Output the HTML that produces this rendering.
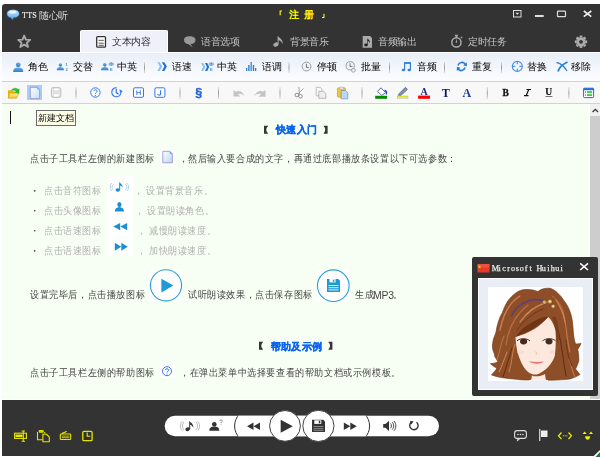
<!DOCTYPE html>
<html><head><meta charset="utf-8">
<style>
*{margin:0;padding:0;box-sizing:border-box}
html,body{width:600px;height:457px;overflow:hidden;background:#fff;font-family:"Liberation Sans",sans-serif}
.a{position:absolute}
.t{position:absolute;white-space:nowrap;font-size:9px;line-height:10px;letter-spacing:0.6px}
svg{position:absolute;overflow:visible}
.tb{font-size:10px;letter-spacing:-0.4px;will-change:transform}
.tc{transform:scaleY(1.1);transform-origin:0 90%}
</style></head><body>
<!-- window frame -->
<div class="a" style="left:2px;top:4px;width:598px;height:48px;background:#333;border-top-left-radius:3px"></div>
<!-- title -->
<div class="t" style="left:22px;top:11px;color:#f0f0f0;font-family:'Liberation Serif',serif;font-size:8px;letter-spacing:0.3px;will-change:transform;-webkit-text-stroke:0.15px #f0f0f0">TTS</div>
<div class="t tb" style="left:38.5px;top:10.5px;color:#ddd">随心听</div>
<div class="t" style="left:288.5px;top:10px;color:#ff0;font-size:10px;font-weight:bold">注</div><div class="t" style="left:303.5px;top:10px;color:#ff0;font-size:10px;font-weight:bold">册</div>
<!-- tabs -->
<div class="a" style="left:80px;top:30px;width:88px;height:23px;background:#eef1f9;border:1px solid #fff;border-bottom:none;border-radius:2px 2px 0 0"></div>
<div class="t tb" style="left:112px;top:37px;color:#333">文本内容</div>
<div class="t tb" style="left:201px;top:37px;color:#c4c4c4">语音选项</div>
<div class="t tb" style="left:290px;top:37px;color:#c4c4c4">背景音乐</div>
<div class="t tb" style="left:378px;top:37px;color:#c4c4c4">音频输出</div>
<div class="t tb" style="left:468px;top:37px;color:#c4c4c4">定时任务</div>

<!-- title icons -->
<svg style="left:0;top:0" width="600" height="60">
 <defs><linearGradient id="bub" x1="0" y1="0" x2="0" y2="1"><stop offset="0" stop-color="#d8efff"/><stop offset="0.5" stop-color="#8ccaf8"/><stop offset="1" stop-color="#3b8fe0"/></linearGradient></defs>
 <path d="M7 13.8 C7 11 9.5 9.8 13 9.8 C16.5 9.8 19.2 11 19.2 13.8 C19.2 16.3 16.8 17.8 13.5 17.8 L12.8 20 L10.6 17.7 C8.5 17.3 7 16 7 13.8Z" fill="url(#bub)" stroke="#2a6fbf" stroke-width="0.5"/>
 <ellipse cx="12.5" cy="12.3" rx="3.5" ry="1.2" fill="#fff" opacity="0.8"/>
 <!-- star -->
 <path d="M24.2 35.6 L25.9 39.6 L30.2 39.9 L26.9 42.7 L28 46.9 L24.2 44.6 L20.4 46.9 L21.5 42.7 L18.2 39.9 L22.5 39.6Z" fill="none" stroke="#a8a8a8" stroke-width="1.9" stroke-linejoin="round"/>
 <!-- doc icon active tab -->
 <rect x="96.7" y="36.6" width="8.8" height="10.6" rx="1" fill="#fff" stroke="#333" stroke-width="1.3"/>
 <path d="M98.6 40.3h5.2M98.6 43.2h5.2M98.6 45.3h5.2" stroke="#555" stroke-width="1"/>
 <!-- chat bubble -->
 <path d="M184 40 C184 37.6 186 36.3 189.5 36.3 C193 36.3 195.5 37.6 195.5 40 C195.5 42.5 193.5 44 190.5 44 L192.8 47.5 L188.2 44 C185.8 43.8 184 42.5 184 40Z" fill="#999"/>
 <!-- music note -->
 <ellipse cx="275.8" cy="44.6" rx="2.6" ry="2.1" fill="#aaa" transform="rotate(-20 275.8 44.6)"/>
 <path d="M277.6 44.5 L277.6 36 C279 37.5 283.5 39.5 282.6 44.5 C282 41.5 279.5 40.5 278.6 40.3 L278.6 44.5Z" fill="#aaa"/>
 <!-- doc music -->
 <path d="M362.7 36 h7.3 l2 2 v9.8 h-9.3Z" fill="#aaa"/>
 <ellipse cx="366" cy="45" rx="1.8" ry="1.4" fill="#222"/>
 <path d="M367.3 45 V38.3 C368 39.5 370.3 40.3 369.8 43 C369.3 41.5 368.3 41.3 367.9 41.2 V45Z" fill="#222"/>
 <!-- stopwatch -->
 <circle cx="456.4" cy="42.4" r="4.6" fill="none" stroke="#aaa" stroke-width="1.5"/>
 <path d="M454.5 34.8 h3.8 l-1 1.6 v1.3 h-1.8 v-1.3Z" fill="#aaa"/>
 <path d="M460.5 37.3 l1.5 -0.8 l0.6 1 l-1.2 0.9Z" fill="#aaa"/>
 <path d="M456.4 38.8 l0.8 4 h-1.6Z" fill="#aaa"/>
 <!-- gear -->
 <g transform="translate(581 41.8)" fill="#aaa">
  <circle r="4.6"/>
  <g id="teeth"><path d="M-1.2 -6.2h2.4l0.4 2h-3.2Z"/></g>
  <use href="#teeth" transform="rotate(45)"/><use href="#teeth" transform="rotate(90)"/><use href="#teeth" transform="rotate(135)"/>
  <use href="#teeth" transform="rotate(180)"/><use href="#teeth" transform="rotate(225)"/><use href="#teeth" transform="rotate(270)"/><use href="#teeth" transform="rotate(315)"/>
  <circle r="1.9" fill="#333"/>
 </g>
 <path d="M279.6 10.6 H282 V11.6 H280.7 V15.2 H279.6Z" fill="#ff0"/>
 <path d="M324.5 17.9 H322 V16.9 H323.4 V13.8 H324.5Z" fill="#ff0"/>
 <!-- window controls -->
 <rect x="513.5" y="10.5" width="7.5" height="6.5" fill="none" stroke="#ddd" stroke-width="1"/>
 <path d="M515.3 12.8h4l-2 2Z" fill="#ddd"/>
 <rect x="535" y="15" width="8.7" height="2" fill="#ddd"/>
 <rect x="557.5" y="11.2" width="8" height="5.5" rx="0.8" fill="none" stroke="#ddd" stroke-width="1.2"/>
 <path d="M583.8 11 L591.3 16.7 M591.3 11 L583.8 16.7" stroke="#eee" stroke-width="1.6"/>
</svg>
<!-- white line -->
<div class="a" style="left:2px;top:52px;width:598px;height:1px;background:#fff"></div>
<!-- toolbar1 -->
<div class="a" style="left:2px;top:53px;width:598px;height:28px;background:linear-gradient(#e8eef8,#fcfdff)"></div>
<div class="a" style="left:2px;top:81px;width:598px;height:1px;background:#d2d2d2"></div>
<div class="a" style="left:2px;top:82px;width:598px;height:21px;background:#f8f8f8"></div>
<div class="a" style="left:2px;top:103px;width:598px;height:1px;background:#d2d2d2"></div>

<!-- toolbar1 content -->
<div class="t tb" style="left:28px;top:62px;color:#000">角色</div>
<div class="t tb" style="left:73px;top:62px;color:#000">交替</div>
<div class="t tb" style="left:117px;top:62px;color:#000">中英</div>
<div class="t tb" style="left:172px;top:62px;color:#000">语速</div>
<div class="t tb" style="left:217px;top:62px;color:#000">中英</div>
<div class="t tb" style="left:262px;top:62px;color:#000">语调</div>
<div class="t tb" style="left:317px;top:62px;color:#000">停顿</div>
<div class="t tb" style="left:361px;top:62px;color:#000">批量</div>
<div class="t tb" style="left:417px;top:62px;color:#000">音频</div>
<div class="t tb" style="left:472px;top:62px;color:#000">重复</div>
<div class="t tb" style="left:527px;top:62px;color:#000">替换</div>
<div class="t tb" style="left:571px;top:62px;color:#000">移除</div>
<svg style="left:0;top:0" width="600" height="104">
 <defs>
  <linearGradient id="sepg" x1="0" y1="0" x2="0" y2="1"><stop offset="0" stop-color="#ddd"/><stop offset="0.5" stop-color="#999"/><stop offset="1" stop-color="#ddd"/></linearGradient>
  <linearGradient id="pb" x1="0" y1="0" x2="0" y2="1"><stop offset="0" stop-color="#6aaee8"/><stop offset="1" stop-color="#2f7cc8"/></linearGradient>
  <g id="person"><circle cx="0" cy="-3.2" r="2.4"/><path d="M-5 4 C-5 0.6 -3 -0.4 0 -0.4 C3 -0.4 5 0.6 5 4Z"/></g>
 </defs>
 <!-- separators tb1 -->
 <g fill="url(#sepg)">
  <rect x="144" y="62" width="1" height="11"/><rect x="288.5" y="62" width="1" height="11"/><rect x="389" y="62" width="1" height="11"/>
  <rect x="444" y="62" width="1" height="11"/><rect x="501" y="62" width="1" height="11"/>
 </g>
 <g fill="url(#pb)">
  <use href="#person" x="18.2" y="68"/>
  <g transform="translate(60.4 67.3) scale(0.72)"><use href="#person"/></g>
  <g transform="translate(104.8 67.3) scale(0.76)"><use href="#person"/></g>
 </g>
 <g fill="#4a90d8" font-family="Liberation Sans" font-size="4" font-weight="bold">
  <text x="65.5" y="65.6">1</text><text x="65.5" y="71">2</text>
  <text x="110" y="71">E</text><text x="210" y="71">E</text>
 </g>
 <g fill="none" stroke="#4a90d8" stroke-width="0.8"><path d="M109.3 63.3 H113.2 V65 H109.3Z M111.25 62 V66"/><path d="M209.3 63.3 H213.2 V65 H209.3Z M211.25 62 V66"/></g>
 <!-- >> -->
 <path d="M157.3 62.3 H159.6 L162.3 66.6 L159.6 71 H157.3 L159.9 66.6Z" fill="#8cc0ec"/>
 <path d="M161.9 62.3 H164.3 L166.9 66.6 L164.3 71 H161.9 L164.4 66.6Z" fill="#1f70d0"/>
 <path d="M201 63 H203.2 L205.4 67 L203.2 71 H201 L203.2 67Z" fill="#8cc0ec"/>
 <path d="M205 63 H207.2 L209.2 67 L207.2 71 H205 L207 67Z" fill="#1f70d0"/>
 <!-- bars -->
 <g fill="#2f7cc8">
  <rect x="246" y="68" width="1.3" height="3"/><rect x="248.2" y="65" width="1.4" height="6"/><rect x="250.4" y="62" width="1.6" height="9" fill="#5a9ad8"/><rect x="252.8" y="65" width="1.4" height="6"/><rect x="255" y="68" width="1.3" height="3"/>
 </g>
 <!-- clocks -->
 <circle cx="306.5" cy="66.5" r="4.4" fill="#eef5fc" stroke="#9a9a9a" stroke-width="1"/>
 <path d="M306.4 63.8 V67.4 H309" fill="none" stroke="#666" stroke-width="0.9"/>
 <circle cx="350.2" cy="65.8" r="4.1" fill="#eef5fc" stroke="#9a9a9a" stroke-width="1"/>
 <path d="M350 63.3 V66.4 H352.4" fill="none" stroke="#666" stroke-width="0.9"/>
 <circle cx="353.4" cy="70.3" r="1.9" fill="#eef5fc" stroke="#9a9a9a" stroke-width="0.9"/>
 <!-- music notes -->
 <g fill="#2f80d8">
  <rect x="404" y="62.1" width="6.9" height="1.8"/>
  <rect x="404" y="62.1" width="1.2" height="8"/><rect x="409.8" y="62.1" width="1.2" height="8"/>
  <ellipse cx="403.4" cy="70" rx="1.7" ry="1.3"/><ellipse cx="409.2" cy="70" rx="1.7" ry="1.3"/>
 </g>
 <!-- refresh -->
 <g fill="none" stroke="#2a7ad6" stroke-width="1.6">
  <path d="M458 65.5 A4 4 0 0 1 465.2 64.2"/>
  <path d="M465 67.5 A4 4 0 0 1 457.8 68.8"/>
 </g>
 <path d="M466.8 62.2 L467 66.3 L463.2 65.4Z" fill="#2a7ad6"/>
 <path d="M456.8 71 L456.9 66.8 L460.6 67.8Z" fill="#2a7ad6"/>
 <!-- crosshair -->
 <circle cx="517.3" cy="66.4" r="5" fill="none" stroke="#4a90dc" stroke-width="1.1"/>
 <path d="M517.3 61.5 V64.2 M517.3 68.6 V71.3 M512.4 66.4 H515.2 M519.4 66.4 H522.2" stroke="#4a90dc" stroke-width="1.1"/>
 <!-- X -->
 <path d="M556.5 62.5 C560 63 564 66 567 71" fill="none" stroke="#2f80d8" stroke-width="1.3"/>
 <path d="M567.5 62 C563 64 559.5 67 558 71.5" fill="none" stroke="#2f80d8" stroke-width="1.9"/>

 <!-- toolbar2 -->
 <g fill="url(#sepg)">
  <rect x="75.5" y="87" width="1" height="12"/><rect x="179.5" y="87" width="1" height="12"/><rect x="218" y="87" width="1" height="12"/>
  <rect x="279.5" y="87" width="1" height="12"/><rect x="361.5" y="87" width="1" height="12"/><rect x="486.8" y="87" width="1" height="12"/><rect x="568.4" y="87" width="1" height="12"/>
 </g>
 <!-- folder -->
 <defs><linearGradient id="fy" x1="0" y1="0" x2="0" y2="1"><stop offset="0" stop-color="#fff4a0"/><stop offset="1" stop-color="#f0c020"/></linearGradient>
 <linearGradient id="dg2" x1="0" y1="0" x2="1" y2="1"><stop offset="0" stop-color="#ffffff"/><stop offset="1" stop-color="#c4def6"/></linearGradient></defs>
 <path d="M8 90.2 H11.8 L12.8 91.2 H15.5 V97.8 H8Z" fill="#e8b800"/>
 <path d="M9.6 93.2 H19 L16.6 98.3 H8.1Z" fill="url(#fy)" stroke="#c08800" stroke-width="0.4"/>
 <path d="M11.2 90.5 C12.5 88 16.5 87.3 18.2 89.6 L19.2 88.8 L19 93.4 L15 92.6 L16.4 91.6 C15.2 90.2 13.2 90 11.2 90.5Z" fill="#2ec02e" stroke="#189018" stroke-width="0.3"/>
 <!-- new doc highlighted -->
 <rect x="27" y="85" width="15" height="15" fill="#a6d0fa"/>
 <path d="M30.3 87.3 H37.3 L39.7 89.6 V98.7 H30.3Z" fill="url(#dg2)" stroke="#9088c8" stroke-width="0.8"/>
 <path d="M37.3 87.3 V89.6 H39.7Z" fill="#6aa8e8"/>
 <!-- save gray -->
 <rect x="51.5" y="87.6" width="9.3" height="9.8" rx="1.5" fill="#f6f6f6" stroke="#b4b4b4" stroke-width="0.9"/>
 <rect x="53.4" y="88" width="5.6" height="3" fill="#fff" stroke="#c4c4c4" stroke-width="0.6"/>
 <path d="M52.5 92.2 H59.8" stroke="#c8c8c8" stroke-width="0.7"/>
 <rect x="53.2" y="93.8" width="5.9" height="3.2" fill="#fff" stroke="#c4c4c4" stroke-width="0.6"/>
 <!-- ? -->
 <circle cx="95.4" cy="92.5" r="4.7" fill="#fff" stroke="#3377ee" stroke-width="1"/>
 <path d="M93.8 91.2 C93.8 89.4 97.1 89.4 97.1 91.1 C97.1 92.4 95.4 92.5 95.4 93.8" fill="none" stroke="#3377ee" stroke-width="1"/>
 <circle cx="95.4" cy="95.6" r="0.7" fill="#3377ee"/>
 <!-- clock arrow -->
 <path d="M120.8 91 A4.6 4.6 0 1 1 116.5 87.6" fill="none" stroke="#3377ee" stroke-width="1.1"/>
 <path d="M119.5 89.2 L122.9 91.3 L120 92.8Z" fill="#3377ee"/>
 <path d="M116.3 88.8 V92.6 L118.6 94.2" fill="none" stroke="#3377ee" stroke-width="1.2"/>
 <!-- H J -->
 <rect x="133.5" y="87.8" width="10" height="9.5" rx="1.3" fill="#fff" stroke="#3377ee" stroke-width="1"/>
 <path d="M136.8 90.3 V95 M140.3 90.3 V95 M136.8 92.6 H140.3" stroke="#3377ee" stroke-width="0.9"/>
 <rect x="154.9" y="87.8" width="10" height="9.5" rx="1.3" fill="#fff" stroke="#3377ee" stroke-width="1"/>
 <path d="M160.6 90.2 V93.8 C160.6 95.6 157.8 95.6 157.8 94" fill="none" stroke="#3377ee" stroke-width="1.1"/>
 <!-- § -->
 <text x="195.3" y="97.2" font-family="Liberation Sans" font-size="12.5" font-weight="bold" fill="#2266dd" stroke="#2266dd" stroke-width="0.4">§</text>
 <!-- undo redo -->
 <path d="M233.5 96.5 L233.5 90 L236 91.8 C239 90 242.5 91.5 244.7 96.3 C242 93.5 239.5 93.5 238 94.2 L240.5 96.5Z" fill="#c4c4c4"/>
 <path d="M265.5 96.8 L265.5 90 L263 91.8 C260 90 256.5 91.5 254 96.3 C257 93.5 259.5 93.5 261 94.2 L258.5 96.8Z" fill="#c4c4c4"/>
 <!-- scissors -->
 <circle cx="296.8" cy="95" r="1.8" fill="none" stroke="#888" stroke-width="0.9"/>
 <circle cx="300.5" cy="96.3" r="1.8" fill="none" stroke="#888" stroke-width="0.9"/>
 <path d="M298.8 87 L299.6 94.5 M303.5 88.5 L298 94" stroke="#999" stroke-width="0.9"/>
 <!-- copy -->
 <path d="M316.2 87.3 H320.2 L322 89 V95.8 H316.2Z" fill="#fafafa" stroke="#b0b0b0" stroke-width="0.8"/>
 <path d="M318.8 91.3 H323.5 L325.8 93.4 V98.3 H318.8Z" fill="#eee" stroke="#aaa" stroke-width="0.8"/>
 <!-- paste -->
 <rect x="337.5" y="87.8" width="8" height="9.5" rx="1.3" fill="#f0c840" stroke="#c09020" stroke-width="0.6"/>
 <rect x="339.8" y="87.2" width="3.6" height="1.8" rx="0.6" fill="#fff" stroke="#999" stroke-width="0.5"/>
 <path d="M341.2 90.5 H345.5 L347.8 92.6 V98.8 H341.2Z" fill="#b8d8f8" stroke="#6a7ab0" stroke-width="0.6"/>
 <!-- paint bucket -->
 <path d="M377.5 91.5 L381 87.8 L385.5 92.5 L381.8 95.5Z" fill="#fff" stroke="#334488" stroke-width="0.8"/>
 <path d="M384.5 90.5 C386.5 90.3 387.2 92.5 386 94.5" fill="none" stroke="#2244cc" stroke-width="1.3"/>
 <rect x="375.2" y="95.8" width="11.8" height="3" fill="#008a00"/>
 <!-- highlighter -->
 <path d="M398 94.8 L405.3 87.3 L407.5 89.3 L400 96.3Z" fill="#8090b0" stroke="#4a5a80" stroke-width="0.6"/>
 <rect x="397.3" y="96" width="10.7" height="2.2" fill="#f0f000" stroke="#a0a8e0" stroke-width="0.4"/>
 <!-- A red -->
 <text x="420.4" y="94.6" font-family="Liberation Serif" font-size="10" font-weight="bold" fill="#1a2a80">A</text>
 <rect x="418.1" y="95.6" width="11.9" height="3.2" fill="#ff0000"/>
 <!-- T A -->
 <text x="441.8" y="96.7" font-family="Liberation Serif" font-size="12" font-weight="bold" fill="#0a1a60">T</text>
 <text x="462.6" y="96.7" font-family="Liberation Serif" font-size="12" font-weight="bold" fill="#1a3a90">A</text>
 <!-- B I U -->
 <text x="502.5" y="95.8" font-family="Liberation Serif" font-size="9.5" font-weight="bold" fill="#111" stroke="#111" stroke-width="0.3">B</text>
 <path d="M526.5 89.5 H531 M524 95.6 H528.5 M528.8 89.5 L526.2 95.6" fill="none" stroke="#111" stroke-width="1.2"/>
 <text x="545.2" y="95.2" font-family="Liberation Serif" font-size="9.5" font-weight="bold" fill="#111" stroke="#111" stroke-width="0.2">U</text>
 <rect x="545.4" y="96.2" width="7" height="0.8" fill="#555"/>
 <!-- list -->
 <rect x="583.6" y="88.2" width="10" height="9.4" rx="0.8" fill="#fff" stroke="#1e6ee0" stroke-width="1"/>
 <rect x="583.6" y="88.2" width="10" height="2" fill="#1e6ee0"/>
 <g fill="#22bb22"><rect x="585" y="91.3" width="1" height="1.5"/><rect x="587" y="91.3" width="5" height="1.5"/><rect x="585" y="94.3" width="1" height="1.5"/><rect x="587" y="94.3" width="5" height="1.5"/></g>
</svg>
<!-- content -->
<div class="a" style="left:2px;top:104px;width:598px;height:295px;background:#f7fff4"></div>

<!-- content text -->
<div class="a" style="left:10px;top:111px;width:1px;height:13px;background:#111"></div>
<div class="a" style="left:36px;top:110px;width:40px;height:16px;background:#ffffe8;border:1px solid #6a6a6a"></div>
<div class="t" style="left:38px;top:113px;color:#000;letter-spacing:0">新建文档</div>
<div class="t" style="left:276px;top:125px;color:#0a64f0;font-weight:bold;font-size:10px;letter-spacing:0.35px;-webkit-text-stroke:0.3px #0a64f0">快速入门</div>
<div class="t" style="left:270.5px;top:342px;color:#0a64f0;font-weight:bold;font-size:10px;letter-spacing:0.35px;-webkit-text-stroke:0.3px #0a64f0">帮助及示例</div>
<div class="t tc" style="left:30px;top:154px;color:#444">点击子工具栏左侧的新建图标</div>
<div class="t tc" style="left:178.5px;top:154px;color:#444">，然后输入要合成的文字，再通过底部播放条设置以下可选参数：</div>
<div class="a" style="left:107px;top:176px;width:26px;height:80px;background:#fff"></div>
<div class="t tc" style="left:44px;top:186px;color:#b0b0b0">点击音符图标</div>
<div class="t tc" style="left:44px;top:206px;color:#b0b0b0">点击头像图标</div>
<div class="t tc" style="left:44px;top:226px;color:#b0b0b0">点击语速图标</div>
<div class="t tc" style="left:44px;top:246px;color:#b0b0b0">点击语速图标</div>
<div class="t tc" style="left:134px;top:186px;color:#b0b0b0">，</div><div class="t tc" style="left:146px;top:186px;color:#b0b0b0">设置背景音乐。</div>
<div class="t tc" style="left:135px;top:206px;color:#b0b0b0">，</div><div class="t tc" style="left:147px;top:206px;color:#b0b0b0">设置朗读角色。</div>
<div class="t tc" style="left:137px;top:226px;color:#b0b0b0">，</div><div class="t tc" style="left:149px;top:226px;color:#b0b0b0">减慢朗读速度。</div>
<div class="t tc" style="left:137px;top:246px;color:#b0b0b0">，</div><div class="t tc" style="left:149px;top:246px;color:#b0b0b0">加快朗读速度。</div>
<div class="t tc" style="left:30px;top:290px;color:#444">设置完毕后，点击播放图标</div>
<div class="t tc" style="left:188px;top:290px;color:#444">试听朗读效果，点击保存图标</div>
<div class="t tc" style="left:355px;top:290px;color:#444">生成</div><div class="t tc" style="left:373px;top:289.5px;color:#444;font-size:10.5px;letter-spacing:-0.3px">MP3</div><div class="t tc" style="left:393px;top:290px;color:#444">。</div>
<div class="t tc" style="left:30px;top:368px;color:#444">点击子工具栏左侧的帮助图标</div>
<div class="t tc" style="left:180px;top:368px;color:#444">，在弹出菜单中选择要查看的帮助文档或示例模板。</div>
<svg style="left:0;top:0" width="600" height="400">
 <defs><linearGradient id="dg" x1="0" y1="0" x2="1" y2="1"><stop offset="0" stop-color="#fff"/><stop offset="1" stop-color="#b8d8f4"/></linearGradient></defs>
 <!-- brackets -->
 <g fill="#333">
  <path d="M264 125.8 H268 L267.5 127 C266 127.5 266 131.8 267.5 132.5 L268 133.8 H264Z"/>
  <path d="M327.6 125.8 H323.6 L324.1 127 C325.6 127.5 325.6 131.8 324.1 132.5 L323.6 133.8 H327.6Z"/>
  <path d="M259 341.8 H263 L262.5 343 C261 343.5 261 347.8 262.5 348.5 L263 349.8 H259Z"/>
  <path d="M332.4 341.8 H328.4 L328.9 343 C330.4 343.5 330.4 347.8 328.9 348.5 L328.4 349.8 H332.4Z"/>
 </g>
 <!-- doc icon in text -->
 <rect x="160" y="150" width="15" height="15" fill="#fff"/>
 <path d="M162.8 151.3 H169.8 L172.3 153.8 V162.8 H162.8Z" fill="url(#dg)" stroke="#8a8ac8" stroke-width="0.8"/>
 <path d="M169.8 151.3 V153.8 H172.3Z" fill="#5a9ae0"/>
 <!-- bullets -->
 <g fill="#333"><circle cx="34.7" cy="190.9" r="0.8"/><circle cx="34.7" cy="210.7" r="0.8"/><circle cx="34.7" cy="230.8" r="0.8"/><circle cx="34.7" cy="250.9" r="0.8"/></g>
 <!-- list icons -->
 <g fill="#1a8fd6">
  <ellipse cx="117.8" cy="190" rx="2.2" ry="1.7"/>
  <path d="M119.2 190 V182 C120.5 183.5 123 184.5 122.5 188 C122 186 120.8 185.6 120.2 185.5 V190Z"/>
    <ellipse cx="119.4" cy="204.6" rx="2.1" ry="2.5"/>
  <path d="M114.8 211.6 C114.8 208.8 116.3 207.9 118.3 207.6 L118.5 206.8 H120.3 L120.5 207.6 C122.5 207.9 124 208.8 124 211.6Z"/>
  <path d="M120.2 223 L113.3 226.6 L120.2 230.3Z"/><path d="M127.2 223 L120.3 226.6 L127.2 230.3Z"/>
  <path d="M114.8 242.8 L121.3 246.7 L114.8 250.7Z"/><path d="M121.3 242.8 L127.8 246.7 L121.3 250.7Z"/>
 </g>
 <g fill="none" stroke="#1a8fd6" stroke-width="0.7" opacity="0.55">
  <path d="M113.5 184 C111.5 185.5 111.5 188.5 113.5 190"/><path d="M112 183 C109.5 185 109.5 189 112 191"/>
  <path d="M125.2 184 C127.2 185.5 127.2 188.5 125.2 190"/><path d="M126.7 183 C129.2 185 129.2 189 126.7 191"/>
 </g>
 <!-- play circle -->
 <rect x="150" y="269" width="32" height="32" fill="#fff"/>
 <circle cx="166" cy="285.3" r="15.6" fill="#fff" stroke="#2a9ed8" stroke-width="1.1"/>
 <path d="M161.4 278.7 L173.4 285.5 L161.4 292.4Z" fill="#1e9ad6"/>
 <!-- save circle -->
 <rect x="317" y="269.5" width="32.5" height="32.5" fill="#fff"/>
 <circle cx="333.3" cy="285.7" r="15.8" fill="#fff" stroke="#2a9ed8" stroke-width="1.1"/>
 <path d="M327 279 H338.2 L340 280.8 V292 H327Z" fill="#1e9ad6"/>
 <rect x="329.5" y="279" width="6" height="3.4" fill="#fff"/><rect x="332.8" y="279.6" width="1.5" height="2.2" fill="#1e9ad6"/>
 <g fill="#fff" opacity="0.85"><rect x="328.5" y="285" width="10" height="1"/><rect x="328.5" y="287.2" width="10" height="1"/><rect x="328.5" y="289.4" width="10" height="1"/></g>
 <!-- ? in text -->
 <rect x="160" y="364" width="15" height="14" fill="#fff"/>
 <circle cx="167" cy="371.2" r="4.5" fill="none" stroke="#3a7ae8" stroke-width="1"/>
 <path d="M165.4 370 C165.4 368.3 168.6 368.3 168.6 370 C168.6 371.2 167 371.2 167 372.6" fill="none" stroke="#3a7ae8" stroke-width="1"/>
 <circle cx="167" cy="374" r="0.6" fill="#3a7ae8"/>
</svg>
<!-- scrollbar -->
<div class="a" style="left:589px;top:104px;width:1px;height:295px;background:#fff"></div>
<div class="a" style="left:590px;top:104px;width:10px;height:12px;background:#f0f0f0"></div>
<svg style="left:590px;top:104px" width="10" height="12"><path d="M2.6 8 L5.3 5.3 L8 8" fill="none" stroke="#333" stroke-width="1.3"/></svg>
<div class="a" style="left:590px;top:116px;width:10px;height:283px;background:#cdcdcd"></div>
<!-- bottom bar -->
<div class="a" style="left:2px;top:400px;width:598px;height:56px;background:#333"></div>
<svg style="left:0;top:395px" width="600" height="62">
 <g transform="translate(0 -395)">
 <defs><clipPath id="pillc"><rect x="164.7" y="415.8" width="274.3" height="20.4" rx="10.2"/></clipPath></defs>
 <!-- yellow icons -->
 <g fill="none" stroke="#e6e600" stroke-width="1.1">
  <rect x="14.6" y="433.2" width="11.8" height="5.2"/>
  <path d="M23.3 431 V441.3 M21.6 431 H25 M21.6 441.3 H25"/>
  <path d="M37.5 432 V439.8 H42.5 M44.8 432 V433.6 M39 431.2 H43.2"/>
  <rect x="39.2" y="430.6" width="4" height="1.6" rx="0.5"/>
  <path d="M42.9 434.3 H46.6 L49.3 437 V441.8 H42.9Z"/>
  <rect x="60.3" y="434" width="10.4" height="5.5" rx="0.8"/>
  <path d="M62 434 C62 432.5 66 432.8 66.5 431"/>
  <rect x="82.8" y="431.3" width="9.3" height="9.3" rx="1.2" stroke-width="1.3"/>
  <path d="M87.2 432.6 V436.3 H90.2"/>
 </g>
 <rect x="15.5" y="434.5" width="7" height="2.6" fill="#e6e600"/>
 <g fill="#e6e600" opacity="0.9"><rect x="61.8" y="435.7" width="7.5" height="0.9"/><rect x="61.8" y="437.3" width="7.5" height="0.9"/></g>
 <!-- pill -->
 <rect x="164.7" y="415.8" width="274.3" height="20.4" rx="10.2" fill="#fff"/>
 <g clip-path="url(#pillc)">
  <rect x="234.6" y="409" width="135" height="34" rx="17" fill="#fff" stroke="#333" stroke-width="1"/>
 </g>
 <!-- pill icons -->
 <g fill="#333">
  <ellipse cx="187.6" cy="429.2" rx="2.3" ry="1.8" transform="rotate(-20 187.6 429.2)"/>
  <path d="M189.2 429.2 V421 C190.5 422.5 194 424 193.2 428 C192.6 425.5 190.8 425 190.2 424.8 V429.2Z"/>
  <circle cx="214.3" cy="424.2" r="2.3"/>
  <path d="M209.3 430.8 C209.3 427.5 211.3 426.5 214.3 426.5 C217.3 426.5 219.3 427.5 219.3 430.8Z"/>
  <path d="M280.7 419.8 L292.8 426.2 L280.7 432.8Z"/>
  <path d="M253.5 422.6 L247 426.3 L253.5 430Z"/><path d="M260 422.6 L253.5 426.3 L260 430Z"/>
  <path d="M343.8 422.6 L350.3 426.3 L343.8 430Z"/><path d="M350.3 422.6 L356.8 426.3 L350.3 430Z"/>
  <path d="M383.2 424 H385.5 L389 420.8 V431 L385.5 427.8 H383.2Z"/>
 </g>
 <g fill="none" stroke="#aaa" stroke-width="0.8">
  <path d="M184 422 C182 424 182 428 184 430"/><path d="M182.3 421.2 C179.8 423.5 179.8 428.5 182.3 430.8"/>
  <path d="M196 422 C198 424 198 428 196 430"/><path d="M197.7 421.2 C200.2 423.5 200.2 428.5 197.7 430.8"/>
 </g>
 <path d="M219.8 421 C219.8 419.5 222.3 419.5 222.3 421 C222.3 422 221 422 221 423.3 M221 424.2 V424.8" fill="none" stroke="#666" stroke-width="0.7"/>
 <g fill="none" stroke="#333" stroke-width="0.9">
  <path d="M390.5 423.5 C391.8 424.8 391.8 427 390.5 428.3"/><path d="M392.2 422.2 C394.2 424.2 394.2 427.6 392.2 429.6"/><path d="M393.9 421 C396.5 423.5 396.5 428.3 393.9 430.8"/>
 </g>
 <path d="M411 422.5 A4.2 4.2 0 1 0 416.5 422.2" fill="none" stroke="#333" stroke-width="1.4"/>
 <path d="M409.8 421 L413.6 421.2 L411.5 424.5Z" fill="#333"/>
 <!-- circles -->
 <circle cx="285" cy="425.9" r="15.4" fill="#fff" stroke="#444" stroke-width="1"/>
 <path d="M280.7 419.8 L292.8 426.2 L280.7 432.8Z" fill="#333"/>
 <circle cx="318.4" cy="425.9" r="15.6" fill="#fff" stroke="#444" stroke-width="1"/>
 <path d="M312 419.8 H323.3 L325 421.5 V431.9 H312Z" fill="#333"/>
 <rect x="314.3" y="420.3" width="7" height="3.6" fill="#fff"/><rect x="318.8" y="420.8" width="1.5" height="2.5" fill="#333"/>
 <g fill="#888"><rect x="313.5" y="426" width="10" height="1.1"/><rect x="313.5" y="428.2" width="10" height="1.1"/><rect x="313.5" y="430.2" width="10" height="0.9"/></g>
 <!-- right icons -->
 <rect x="514.6" y="430.6" width="11.8" height="7.8" rx="2.5" fill="none" stroke="#ddd" stroke-width="1.1"/>
 <path d="M518 438.3 L517.3 441 L520.3 438.3" fill="#ddd" stroke="#ddd" stroke-width="0.8"/>
 <g fill="#ddd"><circle cx="518" cy="434.5" r="0.8"/><circle cx="520.5" cy="434.5" r="0.8"/><circle cx="523" cy="434.5" r="0.8"/></g>
 <rect x="539.2" y="429" width="1.1" height="12" fill="#eee"/>
 <path d="M541 430.5 H547.5 V437 H541Z" fill="#eee"/>
 <g fill="none" stroke="#f0f000" stroke-width="1.2">
  <path d="M561.5 432.5 L558.5 435.8 L561.5 439"/><path d="M568.5 432.5 L571.5 435.8 L568.5 439"/>
 </g>
 <g fill="#f0f000"><rect x="562.8" y="435.3" width="1" height="1"/><rect x="564.6" y="435.3" width="1" height="1"/><rect x="566.4" y="435.3" width="1" height="1"/>
  <path d="M582.5 434 L584.6 431.5 L586.6 434Z"/><path d="M589 434 L591 431.5 L593 434Z"/>
  <path d="M585 436.2 H590.2 C590 438.5 588.5 439.8 587.6 439.8 C586.7 439.8 585.2 438.5 585 436.2Z"/>
 </g>
 <!-- bottom-right corner -->
 <path d="M593.7 456 L600 450 V457 H593.7Z" fill="#fff"/>
 <path d="M595.5 457 L600 452 V457Z" fill="#1a7a40"/>
 </g>
</svg>
<!-- popup -->
<div class="a" style="left:472px;top:257px;width:126px;height:139px;background:#333;border-radius:2px"></div>
<div class="a" style="left:478px;top:278px;width:115px;height:112px;background:#e9edf6;border:1px solid #fff"></div>
<div class="a" style="left:488px;top:287px;width:95px;height:94px;background:#fff"></div>

<svg style="left:0;top:250px" width="600" height="150">
 <g transform="translate(0 -250)">
 <text x="495.30 499.72 504.14 508.56 512.98 517.40 521.82 526.24 530.66 535.08 539.50 543.92 548.34 552.76 557.18 561.60" y="271.3" text-anchor="middle" font-family="Liberation Serif" font-size="8.2" fill="#e8e8e8" stroke="#e8e8e8" stroke-width="0.25">Microsoft Huihui</text>
 <rect x="477.5" y="264" width="12" height="8.5" fill="#e83a2a"/>
 <rect x="477.5" y="264" width="12" height="3.5" fill="#f06050" opacity="0.6"/>
 <path d="M479.5 265.3 l0.5 1.2 h1.2 l-1 0.8 l0.4 1.2 l-1.1 -0.7 l-1.1 0.7 l0.4 -1.2 l-1 -0.8 h1.2Z" fill="#ffde00"/>
 <path d="M580.2 263.3 L588 270 M588 263.3 L580.2 270" stroke="#fff" stroke-width="1.6"/>
 <!-- avatar -->
 <path d="M491.5 375 C494 372 496 370 496.9 368 C494 367 491.5 365 490.4 363.6 C494 363.5 497 362.5 498 361.4 C495.5 358 494 356 494.8 354.9 C492.5 350 492 347 492.6 344 C493 339 494.5 336 495.8 333 C497 325 499 318 502.4 312.4 C505 305 508 300 511.2 297 C515 293 518 291 522.1 289.9 C528 289 533 289.5 538 291.5 C541 288.5 546 287.8 550.4 288.3 C555 290 558 293 561.4 297 C565 302 567.5 305 569 309 C571 314 572 318 572.3 321 C573 326 573.2 330 573.4 333 C574 338 574.5 341 575.6 344 C577.5 344 579.5 343.5 581 343.4 C580 346 578.5 348 577.8 349.4 C578.5 353 579 357 578.9 360.4 C578 364 576.5 367 575.6 369.1 C577 371 578.5 373 580 374.6 C577 376.5 573.5 378 570.1 379 C562 380 553 380.5 545 380 L527.6 380 C522 380 517 379.5 513.4 379 C505 378.5 497 377 491.5 375Z" fill="#8e4e28" stroke="#6a3418" stroke-width="0.6"/>
 <g fill="none" stroke-linecap="round">
  <path d="M500 330 C503 315 510 302 520 296" stroke="#c88050" stroke-width="1.4"/>
  <path d="M506 345 C508 330 515 315 528 305" stroke="#b87040" stroke-width="1.2"/>
  <path d="M497 360 C500 352 500 345 504 336" stroke="#c07848" stroke-width="1"/>
  <path d="M503 377 C506 368 509 358 512 348" stroke="#5e2c14" stroke-width="1"/>
  <path d="M509 372 C512 364 512 352 515 344" stroke="#c88050" stroke-width="1"/>
  <path d="M562 310 C567 322 566 338 570 352" stroke="#c07848" stroke-width="1.2"/>
  <path d="M558 330 C562 345 563 360 566 376" stroke="#5e2c14" stroke-width="1"/>
  <path d="M569 360 C572 366 572 372 575 377" stroke="#c88050" stroke-width="1"/>
  <path d="M552 296 C558 300 562 306 564 314" stroke="#b87040" stroke-width="1"/>
 </g>
 <path d="M515.5 337 C516 349 518.5 358 524 367.5 C528 373 533 376 538.4 374 C546 370.5 552 364 554.8 356 C556 347 556 338 555.5 331 C554 324 551 319 548 317 C541 326 530 333 515.5 337Z" fill="#fde8de"/>
 <path d="M532 375.5 C535 377 541 376.5 545 374 L546 381 H531Z" fill="#fde8de"/>
 <path d="M529 380 C534 378.5 542 378.5 548 380 V381 H529Z" fill="#f8f0f0"/>
 <path d="M552 318 C555 324 557 332 557.5 345 C559.5 335 559 325 556 318 C555 316 553.5 316 552 318Z" fill="#7a3e1c"/>
 <path d="M515.5 337 C528 332 541 325 548 317 C543 316 536 320 526 326 C521 330 518 333 515.5 337Z" fill="#6e3618"/>
 <g fill="none" stroke-linecap="round"><path d="M520 322 C527 312 537 305 548 302" stroke="#d08a58" stroke-width="1.3"/><path d="M517 330 C524 320 533 313 543 309" stroke="#6a3216" stroke-width="0.9"/><path d="M556 300 C560 306 563 312 565 322" stroke="#d08a58" stroke-width="1.1"/><path d="M499 372 C502 366 504 360 507 352" stroke="#d08a58" stroke-width="1"/><path d="M572 366 C568 358 567 350 566 340" stroke="#6a3216" stroke-width="0.9"/></g>
 <path d="M511.2 316.7 C513 312 515 309.5 516.6 308 C521 304 525 302 529.8 300.3 C533 299.5 538 299.3 544 301" fill="none" stroke="#5e4076" stroke-width="1.6"/>
 <g fill="#e2b050" stroke="#4a3050" stroke-width="0.5"><circle cx="544.4" cy="302.2" r="2.1"/><circle cx="549.9" cy="301.6" r="2.3"/><circle cx="553.1" cy="306.3" r="2.1"/></g>
 <g fill="#fff8d0"><circle cx="549.9" cy="301.4" r="0.8"/><circle cx="553.1" cy="306" r="0.7"/></g>
 <path d="M517.5 341.5 C520 339 526.5 338.8 529.5 341.8 C526.5 344.5 520.5 344.3 517.5 341.5Z" fill="#fff"/>
 <path d="M543 341.8 C546 338.8 552.5 339 555 341.5 C552 344.3 546 344.5 543 341.8Z" fill="#fff"/>
 <ellipse cx="523.6" cy="341.6" rx="3.6" ry="2.8" fill="#4a2a1a"/>
 <ellipse cx="549" cy="341.6" rx="3.6" ry="2.8" fill="#4a2a1a"/>
 <path d="M517 340.8 C520 338 527 338 530 341 M542.5 341 C545.5 338 552.5 338 555.5 340.8" fill="none" stroke="#2a1810" stroke-width="0.9"/>
 <path d="M535.8 351.5 C536.5 353 536.8 354 535.8 355" fill="none" stroke="#e8a890" stroke-width="0.8"/>
 <path d="M528.7 361 C533 362 539 362.3 543.8 361.5 C541 364.5 532 364.5 528.7 361Z" fill="#e87474"/>
 <ellipse cx="520.5" cy="352" rx="3.5" ry="2" fill="#f8d4cc" opacity="0.6"/><ellipse cx="552" cy="352" rx="3" ry="2" fill="#f8d4cc" opacity="0.6"/>
 </g>
</svg>
</body></html>
